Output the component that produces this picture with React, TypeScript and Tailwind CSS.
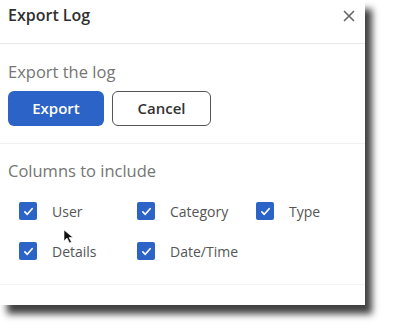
import React from 'react';

const columns = ['User', 'Category', 'Type', 'Details', 'Date/Time'];

const CheckBox: React.FC = () => (
  <span className="flex h-[18px] w-[18px] items-center justify-center rounded-[2px] bg-[#2c63c6]">
    <svg viewBox="0 0 16 16" className="h-[13px] w-[13px]" fill="none" stroke="white" strokeWidth="2" strokeLinecap="round" strokeLinejoin="round">
      <path d="M3.5 8.5l3 3 6-7" />
    </svg>
  </span>
);

const App: React.FC = () => {
  return (
    <div className="h-[333px] w-[393px] bg-white" style={{ fontFamily: '"Open Sans", sans-serif' }}>
      <div className="relative h-[305px] w-[365px] bg-white shadow-[7px_9px_7px_rgba(0,0,0,0.75)]">
        <div className="flex h-[44px] items-start justify-between border-b border-[#e8e8e8] pl-2 pr-[10px] pt-[4px]">
          <h2 className="text-[16px] leading-[22px] font-semibold text-[#303030]">Export Log</h2>
          <svg viewBox="0 0 16 16" className="mt-[6px] h-[12px] w-[12px]" stroke="#666" strokeWidth="2.2" strokeLinecap="round">
            <path d="M2 2l12 12M14 2L2 14" />
          </svg>
        </div>

        <div className="h-[100px] border-b border-[#f0f0f0] px-2 pt-[17px]">
          <p className="text-[16.5px] leading-[22px] text-[#757575]">Export the log</p>
          <div className="mt-[8px] flex gap-2">
            <button className="h-[35px] w-[96px] rounded-[6px] bg-[#2c63c6] text-[15px] font-semibold text-white">Export</button>
            <button className="h-[35px] w-[99px] rounded-[6px] border border-[#555] text-[15px] font-semibold text-[#333]">Cancel</button>
          </div>
        </div>

        <div className="h-[141px] border-b border-[#f3f3f3] px-2 pt-[16px]">
          <p className="text-[16.5px] leading-[22px] text-[#757575]">Columns to include</p>
          <div className="mt-[20px] grid grid-cols-[118px_119px_100px] gap-y-[22px] pl-[11px]">
            {columns.map((c) => (
              <label key={c} className="flex h-[18px] items-center gap-[15px] text-[14px] text-[#555]">
                <CheckBox />
                <span>{c}</span>
              </label>
            ))}
          </div>
        </div>

        <svg viewBox="0 0 10 15" className="absolute left-[63px] top-[229px] h-[15px] w-[10px]">
          <path d="M1 1v11l3-3 2.5 5 2-1-2.5-4.5h4z" fill="#111" stroke="#fff" strokeWidth="0.6" />
        </svg>
      </div>
    </div>
  );
};

export default App;
